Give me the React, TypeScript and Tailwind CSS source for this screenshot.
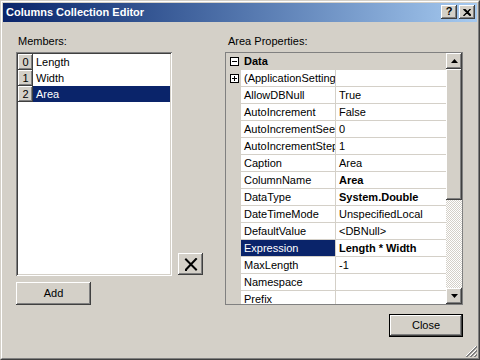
import React from "react";

const raised =
  "bg-[#d4d0c8] shadow-[inset_-1px_-1px_#404040,inset_1px_1px_#ffffff,inset_-2px_-2px_#808080]";

function PlusMinus({ plus }: { plus?: boolean }) {
  return (
    <svg width="9" height="9" viewBox="0 0 9 9" className="block">
      <rect x="0.5" y="0.5" width="8" height="8" fill="#ffffff" stroke="#000000" />
      <line x1="2" y1="4.5" x2="7" y2="4.5" stroke="#000" />
      {plus && <line x1="4.5" y1="2" x2="4.5" y2="7" stroke="#000" />}
    </svg>
  );
}

type Prop = { n: string; v: string; bold?: boolean; sel?: boolean; plus?: boolean };

const props: Prop[] = [
  { n: "(ApplicationSettings)", v: "", plus: true },
  { n: "AllowDBNull", v: "True" },
  { n: "AutoIncrement", v: "False" },
  { n: "AutoIncrementSeed", v: "0" },
  { n: "AutoIncrementStep", v: "1" },
  { n: "Caption", v: "Area" },
  { n: "ColumnName", v: "Area", bold: true },
  { n: "DataType", v: "System.Double", bold: true },
  { n: "DateTimeMode", v: "UnspecifiedLocal" },
  { n: "DefaultValue", v: "<DBNull>" },
  { n: "Expression", v: "Length * Width", bold: true, sel: true },
  { n: "MaxLength", v: "-1" },
  { n: "Namespace", v: "" },
  { n: "Prefix", v: "" },
];

const members = ["Length", "Width", "Area"];

export default function App() {
  return (
    <div className="w-[480px] h-[360px] bg-[#d4d0c8] border border-t-[#d4d0c8] border-l-[#d4d0c8] border-r-[#404040] border-b-[#404040] font-['Liberation_Sans',Arial,sans-serif] text-[11px] leading-[13px] text-black overflow-hidden">
      <div className="h-full border border-t-white border-l-white border-r-[#808080] border-b-[#808080] p-px flex flex-col relative">
        {/* Title bar */}
        <div className="h-[19px] shrink-0 flex items-center bg-gradient-to-r from-[#0a246a] to-[#a6caf0] pl-[3px] pr-[2px]">
          <div className="text-white font-bold flex-1">Columns Collection Editor</div>
          <div className="flex gap-[2px] mt-[-1px]">
            <div className={`w-[16px] h-[14px] ${raised} flex items-center justify-center font-bold text-[11px] leading-[11px] pb-px`}>?</div>
            <div className={`w-[16px] h-[14px] ${raised} flex items-center justify-center`}>
              <svg width="8" height="7" viewBox="0 0 8 7">
                <path d="M0.5 0 L7.5 7 M7.5 0 L0.5 7 M1.5 0 L8 6.5" stroke="#000" strokeWidth="1.4" />
              </svg>
            </div>
          </div>
        </div>

        {/* Body */}
        <div className="flex pl-[13px] pt-[13px]">
          {/* Left column */}
          <div className="w-[187px] flex flex-col">
            <div className="h-[13px] ml-[2px]">Members:</div>
            <div className="mt-[4px] flex items-end">
              <div className="w-[156px] h-[224px] bg-white p-[2px] shadow-[inset_1px_1px_#808080,inset_-1px_-1px_#ffffff,inset_2px_2px_#404040,inset_-2px_-2px_#d4d0c8]">
                {members.map((m, i) => (
                  <div key={m} className="h-[16px] flex">
                    <div className={`w-[15px] h-[16px] ${raised} flex items-center justify-center`}>{i}</div>
                    <div className={`flex-1 flex items-center pl-[3px] ${i === 2 ? "bg-[#0a246a] text-white" : ""}`}>{m}</div>
                  </div>
                ))}
              </div>
              <div className={`ml-[6px] mb-[1px] w-[25px] h-[22px] ${raised} flex items-center justify-center`}>
                <svg width="14" height="13" viewBox="0 0 14 13">
                  <path d="M2 1.5 L12 11.5 M12 1 L2.5 11" stroke="#000" strokeWidth="2" strokeLinecap="square" />
                  <rect x="1" y="11" width="2" height="2" fill="#000" />
                </svg>
              </div>
            </div>
            <div className={`mt-[6px] w-[75px] h-[23px] ${raised} flex items-center justify-center`}>Add</div>
          </div>

          {/* Right column */}
          <div className="ml-[22px] w-[238px] flex flex-col">
            <div className="h-[13px] ml-[3px]">Area Properties:</div>
            <div className="mt-[4px] h-[253px] border border-[#808080] flex overflow-hidden">
              <div className="flex-1 flex flex-col overflow-hidden">
                <div className="h-[17px] shrink-0 bg-[#d4d0c8] flex items-center">
                  <div className="w-[15px] flex justify-center pl-px">
                    <PlusMinus />
                  </div>
                  <div className="pl-[3px] font-bold">Data</div>
                </div>
                {props.map((p) => (
                  <div key={p.n} className="h-[17px] shrink-0 flex">
                    <div className="w-[15px] bg-[#d4d0c8] flex items-center justify-center pl-px">
                      {p.plus && <PlusMinus plus />}
                    </div>
                    <div className="w-[95px] border-b border-r border-[#d4d0c8] bg-white flex">
                      <div className={`flex-1 flex items-center pl-[3px] whitespace-nowrap overflow-hidden ${p.sel ? "bg-[#0a246a] text-white" : ""}`}>{p.n}</div>
                    </div>
                    <div className={`flex-1 border-b border-[#d4d0c8] bg-white flex items-center pl-[3px] whitespace-nowrap overflow-hidden ${p.bold ? "font-bold" : ""}`}>{p.v}</div>
                  </div>
                ))}
              </div>
              {/* Scrollbar */}
              <div className="w-[16px] flex flex-col">
                <div className={`h-[16px] shrink-0 ${raised} flex items-center justify-center`}>
                  <svg width="7" height="4" viewBox="0 0 7 4"><path d="M3.5 0 L7 4 L0 4 Z" fill="#000" /></svg>
                </div>
                <div className={`h-[131px] shrink-0 ${raised}`} />
                <div className="flex-1 bg-[repeating-conic-gradient(#ffffff_0%_25%,#d4d0c8_0%_50%)] bg-[length:2px_2px]" />
                <div className={`h-[16px] shrink-0 ${raised} flex items-center justify-center`}>
                  <svg width="7" height="4" viewBox="0 0 7 4"><path d="M0 0 L7 0 L3.5 4 Z" fill="#000" /></svg>
                </div>
              </div>
            </div>
          </div>
        </div>

        {/* Bottom row */}
        <div className="flex justify-end pr-[14px] mt-[9px]">
          <div className="w-[74px] h-[23px] border border-black">
            <div className={`w-full h-full ${raised} flex items-center justify-center`}>Close</div>
          </div>
        </div>

        {/* Resize grip */}
        <svg width="12" height="12" viewBox="0 0 12 12" className="absolute right-[1px] bottom-[1px]">
          <path d="M11 1 L1 11 M11 5 L5 11 M11 9 L9 11" stroke="#ffffff" strokeWidth="1" />
          <path d="M12 1 L1 12 M12 2 L2 12 M12 5 L5 12 M12 6 L6 12 M12 9 L9 12 M12 10 L10 12" stroke="#808080" strokeWidth="1" />
        </svg>
      </div>
    </div>
  );
}
